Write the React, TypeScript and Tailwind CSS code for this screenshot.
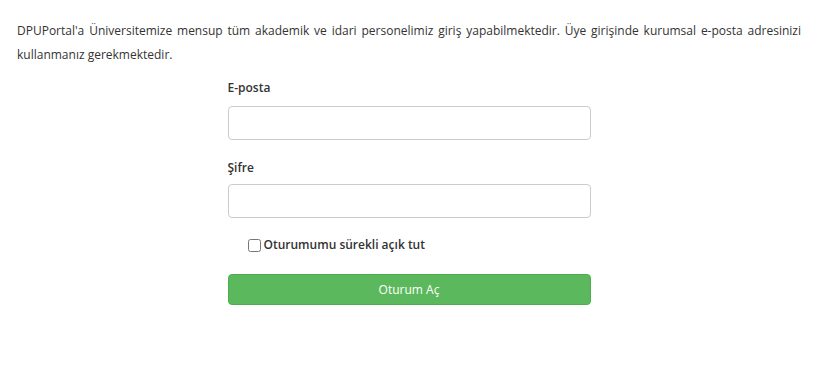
export default function App() {
  return (
    <div className="min-h-[368px] bg-white text-[#333] font-['Open_Sans',sans-serif]">
      <p className="px-[17px] pt-[19px] text-[12px] leading-[24px] text-justify">
        DPUPortal'a Üniversitemize mensup tüm akademik ve idari personelimiz giriş yapabilmektedir. Üye girişinde kurumsal e-posta adresinizi kullanmanız gerekmektedir.
      </p>

      <form className="mx-auto mt-[11px] w-[363px]" onSubmit={(e) => e.preventDefault()}>
        <div className="flex flex-col">
          <label className="text-[12px] leading-[20px] font-semibold">E-posta</label>
          <input
            type="email"
            className="mt-[8px] h-[34px] w-full rounded-[4px] border border-[#ccc] px-3 text-[12px] outline-none"
          />
        </div>

        <div className="mt-[18px] flex flex-col">
          <label className="text-[12px] leading-[20px] font-semibold">Şifre</label>
          <input
            type="password"
            className="mt-[6px] h-[34px] w-full rounded-[4px] border border-[#ccc] px-3 text-[12px] outline-none"
          />
        </div>

        <label className="mt-[17px] ml-[20px] flex items-center gap-[3px] text-[12px] leading-[20px] font-semibold">
          <input type="checkbox" className="h-[13px] w-[13px]" />
          Oturumumu sürekli açık tut
        </label>

        <button
          type="submit"
          className="mt-[19px] h-[31px] w-full rounded-[4px] border border-[#4cae4c] bg-[#5cb85c] text-[12px] text-white"
        >
          Oturum Aç
        </button>
      </form>
    </div>
  );
}
